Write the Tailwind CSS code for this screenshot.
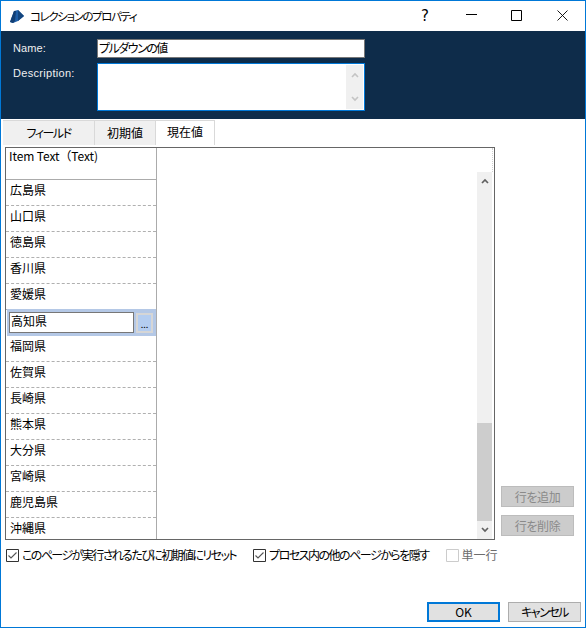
<!DOCTYPE html>
<html lang="ja"><head><meta charset="utf-8"><script src="https://cdn.jsdelivr.net/npm/@tailwindcss/browser@4"></script></head>
<body class="m-0 bg-white">
<div class="w-[586px] h-[628px] box-border border border-[#0078d7] bg-white flex flex-col overflow-hidden text-[12px] text-black [font-feature-settings:'palt'] font-['Noto_Sans_CJK_JP','Noto_Sans',sans-serif]">
  <!-- title bar -->
  <div class="h-[30px] shrink-0 flex items-center">
    <svg class="ml-[9px] w-[15px] h-[13px]" viewBox="0 0 15 13"><path d="M0 12 L4 1 L8 0 L14 6 L8 11 L3 13 Z" fill="#1f5fa8"/><path d="M0 12 L4 1 L6 1 L5 11 L3 13 Z" fill="#123f75"/><path d="M8 0L14 6L8 11Z" fill="#14467f"/></svg>
    <span class="ml-[5px] leading-[16px] text-[11.5px] tracking-[-1.4px]">コレクションのプロパティ</span>
    <span class="ml-auto w-[20px] text-center text-[15px] font-['DejaVu_Sans'] mr-[31px] leading-none">?</span>
    <svg class="w-[11px] h-[10px] mr-[34px] mb-[2px]" viewBox="0 0 11 10"><path d="M0 4.5H11" stroke="#000" fill="none"/></svg>
    <svg class="w-[11px] h-[11px] mr-[35px] mb-[1px]" viewBox="0 0 11 11"><path d="M.5.5H10.5V10.5H.5Z" stroke="#000" fill="none"/></svg>
    <svg class="w-[11px] h-[11px] mr-[17px] mb-[1px]" viewBox="0 0 11 11"><path d="M.5.5L10.5 10.5M10.5.5L.5 10.5" stroke="#000" fill="none" stroke-width="0.9"/></svg>
  </div>
  <!-- dark panel -->
  <div class="h-[88px] shrink-0 bg-[#0e2c4a] pt-[8px] pl-[12px] text-[#f0f0f0] flex flex-col gap-[5px]">
    <div class="flex items-center h-[19px]">
      <span class="w-[84px] text-[11px] font-['Liberation_Sans'] tracking-[0.1px]">Name:</span>
      <div class="w-[268px] h-[19px] box-border border border-[#777] bg-white text-black pl-[1px] leading-[16px] tracking-[-1.5px]">プルダウンの値</div>
    </div>
    <div class="flex items-start">
      <span class="w-[84px] text-[11px] font-['Liberation_Sans'] tracking-[0.3px] mt-[2px]">Description:</span>
      <div class="w-[268px] h-[48px] box-border border border-[#0078d7] bg-white flex justify-end py-[1px] pr-[1px]">
        <div class="w-[17px] bg-[#f0f0f0] flex flex-col justify-between items-center py-[7px]">
          <svg class="w-[8px] h-[6px]" viewBox="0 0 8 6"><path d="M1 5L4 2L7 5" stroke="#c4c4c4" stroke-width="1.6" fill="none"/></svg>
          <svg class="w-[8px] h-[6px]" viewBox="0 0 8 6"><path d="M1 1L4 4L7 1" stroke="#c4c4c4" stroke-width="1.6" fill="none"/></svg>
        </div>
      </div>
    </div>
  </div>
  <!-- tabs -->
  <div class="h-[25px] mt-[1px] shrink-0 flex pl-[2px]">
    <div class="w-[92px] h-[25px] box-border bg-[#f0f0f0] border-r border-t border-[#d9d9d9] flex items-center justify-center tracking-[-1.5px]">フィールド</div>
    <div class="w-[61px] h-[25px] box-border bg-[#f0f0f0] border-r border-t border-[#d9d9d9] flex items-center justify-center">初期値</div>
    <div class="w-[59px] h-[25px] box-border bg-white border-r border-t border-[#d9d9d9] flex items-start pt-[2px] justify-center">現在値</div>
  </div>
  <!-- body -->
  <div class="flex ml-[4px] mt-[2px] h-[393px] shrink-0">
    <div class="w-[490px] h-[393px] box-border border border-[#666] flex overflow-hidden">
      <div class="w-[151px] shrink-0 box-border border-r border-[#ababab] flex flex-col">
        <div class="h-[32px] shrink-0 box-border border-b border-[#ababab] pl-[3px] leading-[16px] tracking-[-0.1px] [font-feature-settings:normal]">Item Text（Text)</div>
        <div class="h-[26px] shrink-0 box-border border-b border-dashed border-[#b0b0b0] pl-[4px] pt-[2px] leading-[16px]">広島県</div>
        <div class="h-[26px] shrink-0 box-border border-b border-dashed border-[#b0b0b0] pl-[4px] pt-[2px] leading-[16px]">山口県</div>
        <div class="h-[26px] shrink-0 box-border border-b border-dashed border-[#b0b0b0] pl-[4px] pt-[2px] leading-[16px]">徳島県</div>
        <div class="h-[26px] shrink-0 box-border border-b border-dashed border-[#b0b0b0] pl-[4px] pt-[2px] leading-[16px]">香川県</div>
        <div class="h-[26px] shrink-0 box-border border-b border-dashed border-[#b0b0b0] pl-[4px] pt-[2px] leading-[16px]">愛媛県</div>
        <div class="h-[27px] -mt-[1px] ml-[1px] shrink-0 box-border bg-[#b4c8e6] flex items-start pt-[3px] pl-[2px] gap-[2px]">
          <div class="w-[125px] h-[21px] box-border border border-[#777] bg-white pl-[1px] leading-[16px]">高知県</div>
          <div class="w-[17px] h-[20px] box-border mt-[1px] border-[2px] border-[#d6d6d6] bg-[#b4cdf0] flex items-end justify-center text-[9px] leading-[12px]">...</div>
        </div>
        <div class="h-[26px] shrink-0 box-border border-b border-dashed border-[#b0b0b0] pl-[4px] pt-[2px] leading-[16px]">福岡県</div>
        <div class="h-[26px] shrink-0 box-border border-b border-dashed border-[#b0b0b0] pl-[4px] pt-[2px] leading-[16px]">佐賀県</div>
        <div class="h-[26px] shrink-0 box-border border-b border-dashed border-[#b0b0b0] pl-[4px] pt-[2px] leading-[16px]">長崎県</div>
        <div class="h-[26px] shrink-0 box-border border-b border-dashed border-[#b0b0b0] pl-[4px] pt-[2px] leading-[16px]">熊本県</div>
        <div class="h-[26px] shrink-0 box-border border-b border-dashed border-[#b0b0b0] pl-[4px] pt-[2px] leading-[16px]">大分県</div>
        <div class="h-[26px] shrink-0 box-border border-b border-dashed border-[#b0b0b0] pl-[4px] pt-[2px] leading-[16px]">宮崎県</div>
        <div class="h-[26px] shrink-0 box-border border-b border-dashed border-[#b0b0b0] pl-[4px] pt-[2px] leading-[16px]">鹿児島県</div>
        <div class="flex-1 box-border pl-[4px] pt-[2px] leading-[16px]">沖縄県</div>
      </div>
      <div class="flex-1 flex justify-end pr-[1px]">
        <div class="w-[16px] flex flex-col">
          <div class="h-[24px] shrink-0 box-border border-r border-dotted border-[#d0d0d0]"></div>
          <div class="w-[15px] flex-1 bg-[#f0f0f0] flex flex-col">
            <div class="h-[18px] flex items-center justify-center"><svg class="w-[8px] h-[6px]" viewBox="0 0 8 6"><path d="M1 5L4 2L7 5" stroke="#606060" stroke-width="1.7" fill="none"/></svg></div>
            <div class="h-[233px]"></div>
            <div class="h-[98px] bg-[#cdcdcd]"></div>
            <div class="flex-1 flex items-center justify-center"><svg class="w-[8px] h-[6px]" viewBox="0 0 8 6"><path d="M1 1L4 4L7 1" stroke="#606060" stroke-width="1.7" fill="none"/></svg></div>
          </div>
        </div>
      </div>
    </div>
    <div class="ml-[6px] flex flex-col justify-end pb-[4px] gap-[8px]">
      <div class="w-[73px] h-[21px] box-border border border-[#bcbcbc] bg-[#cccccc] text-[#8a8a8a] flex items-center justify-center tracking-[-0.4px]">行を追加</div>
      <div class="w-[73px] h-[21px] box-border border border-[#bcbcbc] bg-[#cccccc] text-[#8a8a8a] flex items-center justify-center tracking-[-0.4px]">行を削除</div>
    </div>
  </div>
  <!-- checks -->
  <div class="flex items-center h-[16px] mt-[7px] ml-[5px] shrink-0">
    <svg class="w-[13px] h-[13px]" viewBox="0 0 13 13"><path d="M.5.5H12.5V12.5H.5Z" fill="#fff" stroke="#333"/><path d="M2.5 6.5L5 9L10.5 3.5" fill="none" stroke="#555" stroke-width="1.1"/></svg>
    <span class="ml-[3px] leading-[16px] tracking-[-1.58px]">このページが実行されるたびに初期値にリセット</span>
    <svg class="w-[13px] h-[13px] ml-[17px]" viewBox="0 0 13 13"><path d="M.5.5H12.5V12.5H.5Z" fill="#fff" stroke="#333"/><path d="M2.5 6.5L5 9L10.5 3.5" fill="none" stroke="#555" stroke-width="1.1"/></svg>
    <span class="ml-[3px] leading-[16px] tracking-[-1.5px]">プロセス内の他のページからを隠す</span>
    <svg class="w-[13px] h-[13px] ml-[17px]" viewBox="0 0 13 13"><path d="M.5.5H12.5V12.5H.5Z" fill="#fff" stroke="#ccc"/></svg>
    <span class="ml-[3px] leading-[16px] text-[#6d6d6d]">単一行</span>
  </div>
  <!-- footer -->
  <div class="flex justify-end gap-[8px] mt-[39px] pr-[4px] shrink-0">
    <div class="w-[73px] h-[20px] box-border border-[2px] border-[#0078d7] bg-[#e1e1e1] flex items-center justify-center">OK</div>
    <div class="w-[73px] h-[20px] box-border border border-[#adadad] bg-[#e1e1e1] flex items-center justify-center tracking-[-1.5px]">キャンセル</div>
  </div>
</div>
</body></html>
